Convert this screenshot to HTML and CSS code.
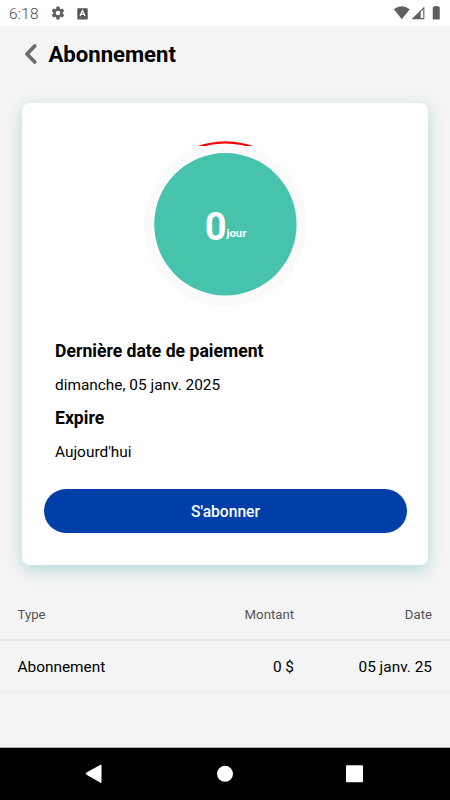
FILE: index.html
```html
<!DOCTYPE html>
<html lang="fr">
<head>
<meta charset="utf-8">
<title>Abonnement</title>
<link rel="stylesheet" href="styles.css">
</head>
<body>
<div class="status">
  <span class="clock">6:18</span>
  <svg class="gear" width="16" height="16" viewBox="0 0 24 24"><path fill="#616161" d="M19.14 12.94c.04-.3.06-.61.06-.94s-.02-.64-.07-.94l2.03-1.58a.49.49 0 0 0 .12-.61l-1.92-3.32a.49.49 0 0 0-.59-.22l-2.39.96a7 7 0 0 0-1.62-.94l-.36-2.54a.48.48 0 0 0-.48-.41h-3.84a.47.47 0 0 0-.47.41l-.36 2.54c-.59.24-1.13.57-1.62.94l-2.39-.96a.47.47 0 0 0-.59.22L2.74 8.87a.47.47 0 0 0 .12.61l2.03 1.58a6 6 0 0 0 0 1.88l-2.03 1.58a.49.49 0 0 0-.12.61l1.92 3.32c.12.22.37.29.59.22l2.39-.96c.5.38 1.03.7 1.62.94l.36 2.54c.05.24.24.41.48.41h3.84c.24 0 .44-.17.47-.41l.36-2.54c.59-.24 1.13-.56 1.62-.94l2.39.96c.22.08.47 0 .59-.22l1.92-3.32a.47.47 0 0 0-.12-.61zM12 15.4a3.4 3.4 0 1 1 0-6.8 3.4 3.4 0 0 1 0 6.8z"/></svg>
  <svg class="keyboard" width="11" height="12" viewBox="0 0 11 12"><rect x=".3" y=".3" width="10.4" height="11.2" rx=".8" fill="#555"/><path d="M3 8 5.5 2.500 8 8M3.900 6.300h3.200" fill="none" stroke="#fff" stroke-width="1.300"/><path d="M2.500 9.700h2M7.500 9.700h1" stroke="#aaa" stroke-width=".8"/></svg>
  <svg class="signals" width="50" height="16" viewBox="0 0 50 16"><path d="M1.800 3.300Q9.800-2.700 17.800 3.300L9.800 13.300z" fill="#606060"/><path d="M19.500 13.200 32.400.500V13.200z" fill="#606060"/><path d="M28.700 5.800 31.300 3.200V12.100H28.700z" fill="#fff"/><path d="M41.500 1.500H43V.7h2.500v.8H47v11.200h-5.500z" fill="#606060" stroke="#606060" stroke-width="1.500" stroke-linejoin="round"/></svg>
</div>
<header class="header">
  <svg width="14" height="20" viewBox="0 0 14 20"><path d="M10.700 2 3 10l7.700 8" fill="none" stroke="#6c6c6c" stroke-width="3.700" stroke-linecap="round" stroke-linejoin="round"/></svg>
  <h1>Abonnement</h1>
</header>
<main>
  <section class="card">
    <div class="dial">
      <svg class="ring" width="170" height="170" viewBox="0 0 170 170"><clipPath id="cap"><path d="M0 0H170V7H0z"/></clipPath><circle cx="85.300" cy="85.300" r="83" fill="#f40000" clip-path="url(#cap)"/><circle cx="85.300" cy="85.900" r="81.400" fill="#fafafa"/><circle cx="85.400" cy="85.300" r="71.200" fill="#46c2ad"/></svg>
      <div class="days"><strong>0</strong><span>jour</span></div>
    </div>
    <div class="details">
      <h2 class="paid">Dernière date de paiement</h2>
      <p class="date">dimanche, 05 janv. 2025</p>
      <h2 class="expires">Expire</h2>
      <p class="today">Aujourd'hui</p>
    </div>
    <button class="subscribe"><span>S'abonner</span></button>
  </section>
  <div class="row head"><span class="type">Type</span><span class="amount">Montant</span><span class="day">Date</span></div>
  <div class="row entry"><span class="type">Abonnement</span><span class="amount">0 $</span><span class="day">05 janv. 25</span></div>
</main>
<nav class="nav">
  <svg width="450" height="52" viewBox="0 0 450 52"><path d="M86.300 25.100 101 17V34.500L86.300 26.100z" fill="#fff" stroke="#fff" stroke-linejoin="round"/><circle cx="225" cy="25.800" r="8" fill="#fff"/><rect x="346" y="17.300" width="17" height="17" rx="1" fill="#fff"/></svg>
</nav>
</body>
</html>
```
FILE: styles.css
```css
* { box-sizing: border-box; }
body { margin: 0; width: 450px; height: 800px; overflow: hidden; display: flex; flex-direction: column; background: #f4f4f4; color: #000; font-family: Roboto, "Liberation Sans", sans-serif; }
svg { display: block; flex: none; }
.status { height: 26px; flex: none; background: #fff; display: flex; align-items: flex-start; padding: 0 2px 0 9px; }
.clock { width: 41px; font-size: 15.3px; line-height: 28px; color: #484848; font-weight: 300; letter-spacing: .3px; }
.gear { margin-top: 5px; }
.keyboard { margin: 8px 0 0 11px; }
.signals { margin: 6px 6px 0 auto; }
.header { height: 76px; flex: none; display: flex; align-items: flex-start; padding: 18px 24px; }
.header h1 { margin: -4px 0 0 10.5px; font-size: 22.1px; line-height: 28px; font-weight: 700; }
main { flex: 1; }
.card { margin: 1px 22px 0; height: 462px; border-radius: 8px; background: #fff; padding: 36px 22px 0; box-shadow: 0 5px 16px rgba(0, 128, 128, .25); }
.dial { display: grid; place-items: center; height: 170px; }
.ring, .days { grid-area: 1 / 1; }
.days { display: flex; align-items: flex-start; color: #fff; padding: 5px 0 0 1px; }
.days strong { font-size: 38px; line-height: 46px; font-weight: 700; }
.days span { margin-top: 15px; font-size: 11.3px; line-height: 30px; font-weight: 700; }
.details { padding: 30px 11px 0; height: 180px; }
.details h2, .details p { margin: 0; height: 33.3px; white-space: nowrap; }
.details h2 { font-size: 17.6px; line-height: 24px; font-weight: 700; }
.details p { font-size: 15.4px; line-height: 26px; }
.subscribe { display: block; width: 363px; height: 44px; padding: 2px 0 0; border: 0; border-radius: 22px; background: #003fa8; color: #fff; font: 500 15.6px Roboto, sans-serif; }
.row { display: grid; grid-template-columns: 140px 136.5px 138px; padding: 0 17.5px; }
.amount, .day { text-align: right; }
.head { height: 76px; padding-top: 37px; border-bottom: 2px solid #eaeaf0; color: #555; font-size: 13.2px; line-height: 25px; }
.entry { height: 52px; border-bottom: 1px solid #eeeeef; font-size: 15.4px; line-height: 52px; }
.nav { height: 53px; flex: none; background: #000; border-top: 1px solid #aaa; }
```
